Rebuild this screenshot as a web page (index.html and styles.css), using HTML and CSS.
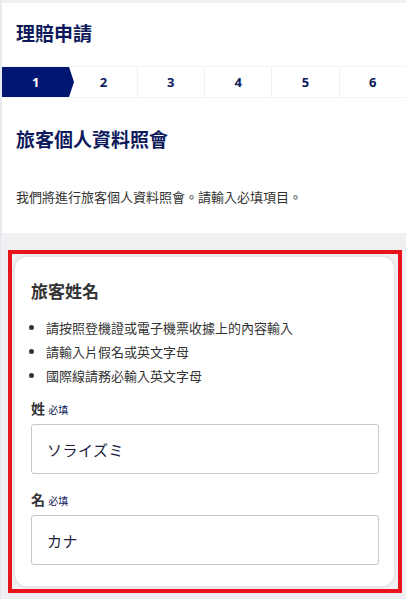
FILE: index.html
```html
<!DOCTYPE html>
<html>
  <head>
    <meta charset="UTF-8">
    <title>理賠申請</title>
    <link rel="stylesheet" href="styles.css">
  </head>
  <body>
    <div id="top">
      <h1 class="title">理賠申請</h1>
      <div class="steps">
        <div class="step current">1</div>
        <div class="step">2</div>
        <div class="step">3</div>
        <div class="step">4</div>
        <div class="step">5</div>
        <div class="step">6</div>
      </div>
      <h2 class="section">旅客個人資料照會</h2>
      <p class="lead">我們將進行旅客個人資料照會。請輸入必填項目。</p>
    </div>
    <div id="main">
      <div class="highlight">
        <div class="card">
          <h3>旅客姓名</h3>
          <ul class="notes">
            <li>請按照登機證或電子機票收據上的內容輸入</li>
            <li>請輸入片假名或英文字母</li>
            <li>國際線請務必輸入英文字母</li>
          </ul>
          <label class="label">姓 <span class="req">必填</span></label>
          <div class="field">ソライズミ</div>
          <label class="label">名 <span class="req">必填</span></label>
          <div class="field">カナ</div>
        </div>
      </div>
    </div>
  </body>
</html>
```

FILE: styles.css
```css
body {
  margin: 0;
  background-color: #f0f0f2;
  color: #333;
  font-family: 'Noto Sans CJK TC', 'Noto Sans', sans-serif;
  font-size: 14px;
  padding-left: 1px;
  border-left: 1px solid #e4e8ee;
}
#top {
  margin-top: 3px;
  background-color: #fff;
  padding: 1px 0 26px;
}
h1.title {
  margin: 15px 0 0 14px;
  font-size: 19px;
  line-height: 28px;
  color: #0e1a5c;
  font-weight: bold;
}
.steps {
  display: grid;
  grid-template-columns: repeat(6, 1fr);
  height: 30px;
  margin-top: 19px;
  border-top: 1px solid #f3f3f3;
  border-bottom: 1px solid #f3f3f3;
}
.step {
  position: relative;
  display: flex;
  align-items: center;
  justify-content: center;
  font-family: 'Noto Sans', sans-serif;
  font-weight: bold;
  font-size: 13px;
  color: #0e1a5c;
  border-left: 1px solid #f0f0f0;
}
.step:first-child { border-left: none; }
.step.current {
  background-color: #001670;
  color: #fff;
}
.step.current::after {
  content: '';
  position: absolute;
  right: -5px;
  top: 0;
  border-top: 15px solid transparent;
  border-bottom: 15px solid transparent;
  border-left: 5px solid #001670;
  z-index: 1;
}
h2.section {
  margin: 27px 0 0 14px;
  font-size: 19px;
  line-height: 28px;
  color: #0e1a5c;
  font-weight: bold;
}
p.lead {
  margin: 34px 0 0 14px;
  font-size: 13px;
  line-height: 20px;
  color: #333;
}
#main {
  padding: 17px 4px 7px 6px;
}
.highlight {
  border: 4px solid #e8141c;
  padding: 3px 4px 3px 3px;
}
.card {
  background-color: #fff;
  border-radius: 12px;
  box-shadow: 0 0 4px rgba(0, 0, 0, 0.12);
  padding: 22px 15px 21px 16px;
}
.card h3 {
  margin: 0;
  font-size: 17px;
  line-height: 24px;
  font-weight: bold;
  color: #333;
}
ul.notes {
  margin: 13px 0 0;
  padding-left: 15px;
  font-size: 13px;
  line-height: 24px;
  color: #333;
}
.label {
  display: block;
  margin-top: 11px;
  font-size: 14px;
  line-height: 18px;
  font-weight: bold;
  color: #333;
}
.label .req {
  font-size: 10px;
  font-weight: normal;
  color: #0e1a5c;
}
.field {
  margin-top: 5px;
  height: 48px;
  border: 1px solid #c8c8c8;
  border-radius: 3px;
  padding: 0 15px;
  display: flex;
  align-items: center;
  font-size: 15px;
  color: #1c1c40;
  letter-spacing: 0.5px;
}
.field + .label { margin-top: 16px; }
```
